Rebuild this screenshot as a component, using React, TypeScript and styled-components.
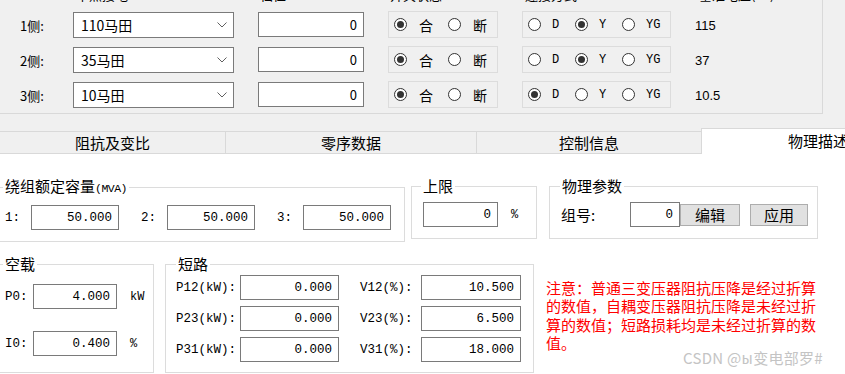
import { Fragment } from "react";
import styled, { createGlobalStyle } from "styled-components";

const CJK = `"Noto Sans CJK SC", "Noto Sans", sans-serif`;
const MONO = `"Liberation Mono", "Noto Sans CJK SC", monospace`;

const GlobalStyle = createGlobalStyle`
  html, body { margin: 0; padding: 0; }
  body {
    width: 845px;
    height: 374px;
    overflow: hidden;
    background: #f0f0f0;
    font-family: ${CJK};
    color: #000;
  }
`;

const sides = [
  { label: "1侧:", type: "110马田", tap: "0", conn: "Y", volt: "115" },
  { label: "2侧:", type: "35马田", tap: "0", conn: "Y", volt: "37" },
  { label: "3侧:", type: "10马田", tap: "0", conn: "D", volt: "10.5" },
];

const headers = [
  { text: "", indent: 0 },
  { text: "中点接地", indent: 3 },
  { text: "档位", indent: 2 },
  { text: "开关状态", indent: 2 },
  { text: "连接方式", indent: 3 },
  { text: "基准电压(kV)", indent: 4 },
];

const tabs = [
  { name: "阻抗及变比", width: 225 },
  { name: "零序数据", width: 251 },
  { name: "控制信息", width: 225 },
];

/* ---------- top panel ---------- */

const TopPanel = styled.div`
  width: 822px;
  height: 113px;
  border-right: 1px solid #d9d9d9;
  border-bottom: 1px solid #d9d9d9;
`;

const columns = `49px 161px 106px 110px 149px auto`;

const HeaderStrip = styled.div`
  height: 3px;
  overflow: hidden;
  display: grid;
  grid-template-columns: ${columns};
  column-gap: 24px;
`;

const HeaderCell = styled.div<{ $indent: number }>`
  margin-top: -12px;
  padding-left: ${(p) => p.$indent}px;
  font-size: 13px;
  line-height: 13px;
  white-space: nowrap;
`;

const SideGrid = styled.div`
  display: grid;
  grid-template-columns: ${columns};
  grid-auto-rows: 26px;
  column-gap: 24px;
  row-gap: 9px;
  padding-top: 9px;
`;

const SideLabel = styled.div`
  display: flex;
  align-items: center;
  padding-left: 20px;
  font-size: 13px;
`;

const Combo = styled.div`
  display: flex;
  align-items: center;
  justify-content: space-between;
  border: 1px solid #7a7a7a;
  background: #fff;
  padding: 0 6px 0 7px;
  font-size: 14px;
`;

const TextBox = styled.div<{ $mono?: boolean }>`
  display: flex;
  align-items: center;
  justify-content: flex-end;
  box-sizing: border-box;
  height: 25px;
  border: 1px solid #7a7a7a;
  background: #fff;
  padding-right: 6px;
  font-family: ${(p) => (p.$mono ? MONO : CJK)};
  font-size: ${(p) => (p.$mono ? "12.5px" : "13px")};
`;

const RadioBox = styled.div`
  display: flex;
  align-items: center;
  border: 1px solid #dcdcdc;
  padding-left: 5px;
  margin-top: -1px;
`;

const RadioItem = styled.div<{ $width: number; $gap: number }>`
  display: flex;
  align-items: center;
  gap: ${(p) => p.$gap}px;
  width: ${(p) => p.$width}px;
  flex: none;
`;

const Circle = styled.span<{ $on: boolean }>`
  display: grid;
  place-items: center;
  box-sizing: border-box;
  width: 13px;
  height: 13px;
  border: 1px solid #333;
  border-radius: 50%;
  background: #fff;
  &::after {
    content: "";
    width: 7px;
    height: 7px;
    border-radius: 50%;
    background: ${(p) => (p.$on ? "#333" : "transparent")};
  }
`;

const RadioText = styled.span<{ $mono?: boolean }>`
  font-family: ${(p) => (p.$mono ? MONO : CJK)};
  font-size: ${(p) => (p.$mono ? "12px" : "14px")};
`;

const VoltText = styled.div`
  display: flex;
  align-items: center;
  font-family: "Liberation Sans", sans-serif;
  font-size: 13px;
`;

/* ---------- tabs ---------- */

const TabBar = styled.div`
  display: flex;
  align-items: flex-end;
  height: 26px;
  margin-top: 14px;
  overflow: hidden;
`;

const Tab = styled.div<{ $width: number }>`
  box-sizing: border-box;
  flex: none;
  width: ${(p) => p.$width}px;
  height: 23px;
  border: 1px solid #d9d9d9;
  border-right: none;
  background: #f0f0f0;
  font-size: 15px;
  line-height: 21px;
  text-align: center;
  &:first-child {
    border-left: none;
  }
`;

const ActiveTab = styled.div`
  box-sizing: border-box;
  flex: none;
  width: 234px;
  height: 26px;
  border: 1px solid #d9d9d9;
  border-bottom: none;
  background: #fff;
  font-size: 15px;
  line-height: 24px;
  text-align: center;
`;

/* ---------- content ---------- */

const Content = styled.div`
  position: relative;
  height: 220px;
  background: #fff;
  overflow: hidden;
`;

const GroupRow = styled.div<{ $top: number }>`
  display: flex;
  align-items: flex-start;
  margin-top: ${(p) => p.$top}px;
  margin-left: -3px;
`;

const Group = styled.fieldset<{ $width: number; $gapLeft?: number }>`
  box-sizing: border-box;
  width: ${(p) => p.$width}px;
  margin: 0 0 0 ${(p) => p.$gapLeft ?? 0}px;
  padding: 0;
  min-width: 0;
  border: 1px solid #dcdcdc;
  flex: none;
`;

const Legend = styled.legend<{ $indent: number }>`
  margin-left: ${(p) => p.$indent}px;
  padding: 0 2px;
  font-size: 15px;
  line-height: 18px;
`;

const LegendUnit = styled.span`
  font-family: ${MONO};
  font-size: 11.5px;
  letter-spacing: -0.5px;
`;

const GroupBody = styled.div<{ $pad: string; $gap?: number; $dir?: string }>`
  display: flex;
  flex-direction: ${(p) => p.$dir ?? "row"};
  align-items: ${(p) => (p.$dir === "column" ? "stretch" : "center")};
  gap: ${(p) => p.$gap ?? 0}px;
  padding: ${(p) => p.$pad};
`;

const Field = styled.div<{ $gap?: number }>`
  display: flex;
  align-items: center;
  gap: ${(p) => p.$gap ?? 0}px;
`;

const FieldLabel = styled.span<{ $width: number; $mono?: boolean }>`
  width: ${(p) => p.$width}px;
  flex: none;
  font-family: ${(p) => (p.$mono ? MONO : CJK)};
  font-size: ${(p) => (p.$mono ? "12.5px" : "15px")};
  white-space: nowrap;
`;

const Input = styled(TextBox)<{ $width: number }>`
  width: ${(p) => p.$width}px;
  flex: none;
`;

const Unit = styled.span`
  font-family: ${MONO};
  font-size: 12px;
`;

const Button = styled.div<{ $width: number; $gapLeft?: number }>`
  box-sizing: border-box;
  width: ${(p) => p.$width}px;
  height: 22px;
  margin-left: ${(p) => p.$gapLeft ?? 0}px;
  border: 1px solid #adadad;
  background: #e1e1e1;
  font-size: 15px;
  line-height: 20px;
  text-align: center;
  flex: none;
`;

const Note = styled.div`
  width: 271px;
  margin: 24px 0 0 12px;
  color: #ff0000;
  font-size: 15px;
  line-height: 18.3px;
  flex: none;
`;

const Watermark = styled.div`
  position: absolute;
  right: 22px;
  bottom: 6px;
  color: #c4c4c4;
  font-family: ${CJK};
  font-size: 15px;
  letter-spacing: 0.3px;
`;

function Chevron() {
  return (
    <svg width="10" height="6" viewBox="0 0 10 6">
      <polyline points="0.5,0.5 5,5 9.5,0.5" fill="none" stroke="#606060" strokeWidth="1" />
    </svg>
  );
}

function Radio({ on, text, width, gap, mono }: { on: boolean; text: string; width: number; gap: number; mono?: boolean }) {
  return (
    <RadioItem $width={width} $gap={gap}>
      <Circle $on={on} />
      <RadioText $mono={mono}>{text}</RadioText>
    </RadioItem>
  );
}

function SidePanel() {
  return (
    <TopPanel>
      <HeaderStrip>
        {headers.map((h, i) => (
          <HeaderCell key={i} $indent={h.indent}>
            {h.text}
          </HeaderCell>
        ))}
      </HeaderStrip>
      <SideGrid>
        {sides.map((s) => (
          <Fragment key={s.label}>
            <SideLabel>{s.label}</SideLabel>
            <Combo>
              {s.type}
              <Chevron />
            </Combo>
            <TextBox>{s.tap}</TextBox>
            <RadioBox>
              <Radio on text="合" width={54} gap={12} />
              <Radio on={false} text="断" width={54} gap={12} />
            </RadioBox>
            <RadioBox>
              {["D", "Y", "YG"].map((c) => (
                <Radio key={c} on={s.conn === c} text={c} width={47} gap={11} mono />
              ))}
            </RadioBox>
            <VoltText>{s.volt}</VoltText>
          </Fragment>
        ))}
      </SideGrid>
    </TopPanel>
  );
}

const shortRows = [
  { p: "P12(kW):", pv: "0.000", v: "V12(%):", vv: "10.500" },
  { p: "P23(kW):", pv: "0.000", v: "V23(%):", vv: "6.500" },
  { p: "P31(kW):", pv: "0.000", v: "V31(%):", vv: "18.000" },
];

function PhysicalTab() {
  return (
    <Content>
      <GroupRow $top={23}>
        <Group $width={408}>
          <Legend $indent={5}>
            绕组额定容量<LegendUnit>(MVA)</LegendUnit>
          </Legend>
          <GroupBody $pad="7px 0 11px 7px" $gap={22}>
            {["1:", "2:", "3:"].map((l) => (
              <Field key={l}>
                <FieldLabel $width={26} $mono>
                  {l}
                </FieldLabel>
                <Input $width={88} $mono>
                  50.000
                </Input>
              </Field>
            ))}
          </GroupBody>
        </Group>
        <Group $width={126} $gapLeft={6}>
          <Legend $indent={9}>上限</Legend>
          <GroupBody $pad="7px 0 11px 11px" $gap={13}>
            <Input $width={75} $mono>
              0
            </Input>
            <Unit>%</Unit>
          </GroupBody>
        </Group>
        <Group $width={269} $gapLeft={12}>
          <Legend $indent={10}>物理参数</Legend>
          <GroupBody $pad="7px 0 11px 11px">
            <FieldLabel $width={69}>组号:</FieldLabel>
            <Input $width={50} $mono>
              0
            </Input>
            <Button $width={60}>编辑</Button>
            <Button $width={58} $gapLeft={10}>
              应用
            </Button>
          </GroupBody>
        </Group>
      </GroupRow>

      <GroupRow $top={13}>
        <Group $width={157}>
          <Legend $indent={5}>空载</Legend>
          <GroupBody $pad="11px 0 16px 7px" $gap={22} $dir="column">
            <Field $gap={13}>
              <Field>
                <FieldLabel $width={28} $mono>
                  P0:
                </FieldLabel>
                <Input $width={84} $mono>
                  4.000
                </Input>
              </Field>
              <Unit>kW</Unit>
            </Field>
            <Field $gap={13}>
              <Field>
                <FieldLabel $width={28} $mono>
                  I0:
                </FieldLabel>
                <Input $width={84} $mono>
                  0.400
                </Input>
              </Field>
              <Unit>%</Unit>
            </Field>
          </GroupBody>
        </Group>
        <Group $width={369} $gapLeft={11}>
          <Legend $indent={10}>短路</Legend>
          <GroupBody $pad="2px 0 10px 10px" $gap={6} $dir="column">
            {shortRows.map((r) => (
              <Field key={r.p} $gap={21}>
                <Field>
                  <FieldLabel $width={64} $mono>
                    {r.p}
                  </FieldLabel>
                  <Input $width={99} $mono>
                    {r.pv}
                  </Input>
                </Field>
                <Field>
                  <FieldLabel $width={61} $mono>
                    {r.v}
                  </FieldLabel>
                  <Input $width={100} $mono>
                    {r.vv}
                  </Input>
                </Field>
              </Field>
            ))}
          </GroupBody>
        </Group>
        <Note>注意：普通三变压器阻抗压降是经过折算的数值，自耦变压器阻抗压降是未经过折算的数值；短路损耗均是未经过折算的数值。</Note>
      </GroupRow>
      <Watermark>CSDN @ы变电部罗#</Watermark>
    </Content>
  );
}

export default function App() {
  return (
    <>
      <GlobalStyle />
      <SidePanel />
      <TabBar>
        {tabs.map((t) => (
          <Tab key={t.name} $width={t.width}>
            {t.name}
          </Tab>
        ))}
        <ActiveTab>物理描述</ActiveTab>
      </TabBar>
      <PhysicalTab />
    </>
  );
}
